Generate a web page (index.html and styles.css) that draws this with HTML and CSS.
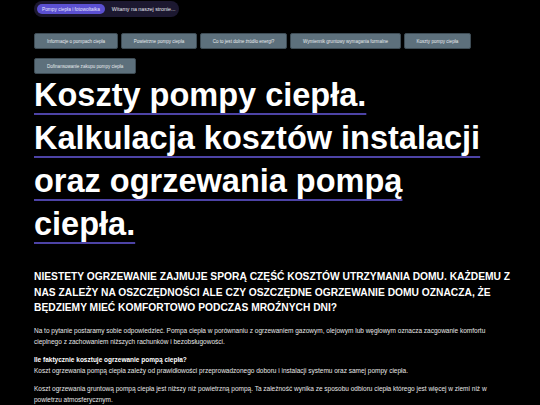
FILE: index.html
```html
<!DOCTYPE html>
<html lang="pl">
<head>
<meta charset="utf-8">
<title>Koszty pompy ciepła</title>
<link rel="stylesheet" href="styles.css">
</head>
<body>
<div class="page">
  <div class="topbar">
    <span class="badge">Pompy ciepła i fotowoltaika</span>
    <span class="welcome">Witamy na naszej stronie...</span>
  </div>
  <nav class="nav">
    <a class="btn">Informacje o pompach ciepła</a>
    <a class="btn">Powietrzne pompy ciepła</a>
    <a class="btn">Co to jest dolne źródło energi?</a>
    <a class="btn">Wymiennik gruntowy wymagania formalne</a>
    <a class="btn">Koszty pompy ciepła</a>
    <a class="btn">Dofinansowanie zakupu pompy ciepła</a>
  </nav>
  <h1 class="title">Koszty pompy ciepła. Kalkulacja kosztów instalacji oraz ogrzewania pompą ciepła.</h1>
  <h2 class="lead">Niestety ogrzewanie zajmuje sporą część kosztów utrzymania domu. Każdemu z nas zależy na oszczędności ale czy oszczędne ogrzewanie domu oznacza, że będziemy mieć komfortowo podczas mroźnych dni?</h2>
  <p class="text">Na to pytanie postaramy sobie odpowiedzieć. Pompa ciepła w porównaniu z ogrzewaniem gazowym, olejowym lub węglowym oznacza zacgowanie komfortu cieplnego z zachowaniem niższych rachunków i bezobsługowości.</p>
  <p class="text"><strong>Ile faktycznie kosztuje ogrzewanie pompą ciepła?</strong><br>Koszt ogrzewania pompą ciepła zależy od prawidłowości przeprowadzonego doboru i instalacji systemu oraz samej pompy ciepła.</p>
  <p class="text">Koszt ogrzewania gruntową pompą ciepła jest niższy niż powietrzną pompą. Ta zależność wynika ze sposobu odbioru ciepła którego jest więcej w ziemi niż w powietrzu atmosferycznym.</p>
</div>
</body>
</html>
```
FILE: styles.css
```css
html, body {
  margin: 0;
  padding: 0;
  background: #000;
}
body {
  font-family: "Liberation Sans", Arial, Helvetica, sans-serif;
  color: #fff;
}
.page {
  padding: 1px 20px 0 34px;
}
.topbar {
  display: flex;
  width: fit-content;
  align-items: center;
  gap: 7px;
  height: 16px;
  padding: 0 4px 0 3px;
  border-radius: 8px;
  background: #1c1830;
}
.badge {
  display: flex;
  align-items: center;
  height: 10px;
  padding: 0 5px;
  border-radius: 5px;
  background: #5b50d2;
  color: #e8e6ff;
  font-size: 4.8px;
}
.welcome {
  color: #e6e6ee;
  font-size: 5.3px;
}
.nav {
  display: flex;
  flex-wrap: wrap;
  column-gap: 2.5px;
  row-gap: 9px;
  margin-top: 16px;
  padding-right: 20px;
}
.btn {
  display: flex;
  align-items: center;
  height: 16px;
  box-sizing: border-box;
  padding: 0 12px;
  border: 0.5px solid #3e4c55;
  border-radius: 2px;
  background: #5d707c;
  color: #e6ebee;
  font-size: 4.55px;
}
.title {
  margin: 0;
  padding-right: 14px;
  font-size: 32.5px;
  line-height: 43px;
  font-weight: 700;
  color: #fff;
  text-decoration: underline;
  text-decoration-color: #4d43a6;
  text-decoration-thickness: 1.5px;
  text-underline-offset: 7px;
}
.lead {
  margin: 23px 0 9px;
  font-size: 10.25px;
  line-height: 15.5px;
  font-weight: 700;
  text-transform: uppercase;
  color: #fff;
}
.text {
  margin: 0 0 7px;
  padding-right: 30px;
  font-size: 6.5px;
  line-height: 11px;
  color: #e8e8e8;
}
.text strong {
  color: #fff;
}
```
